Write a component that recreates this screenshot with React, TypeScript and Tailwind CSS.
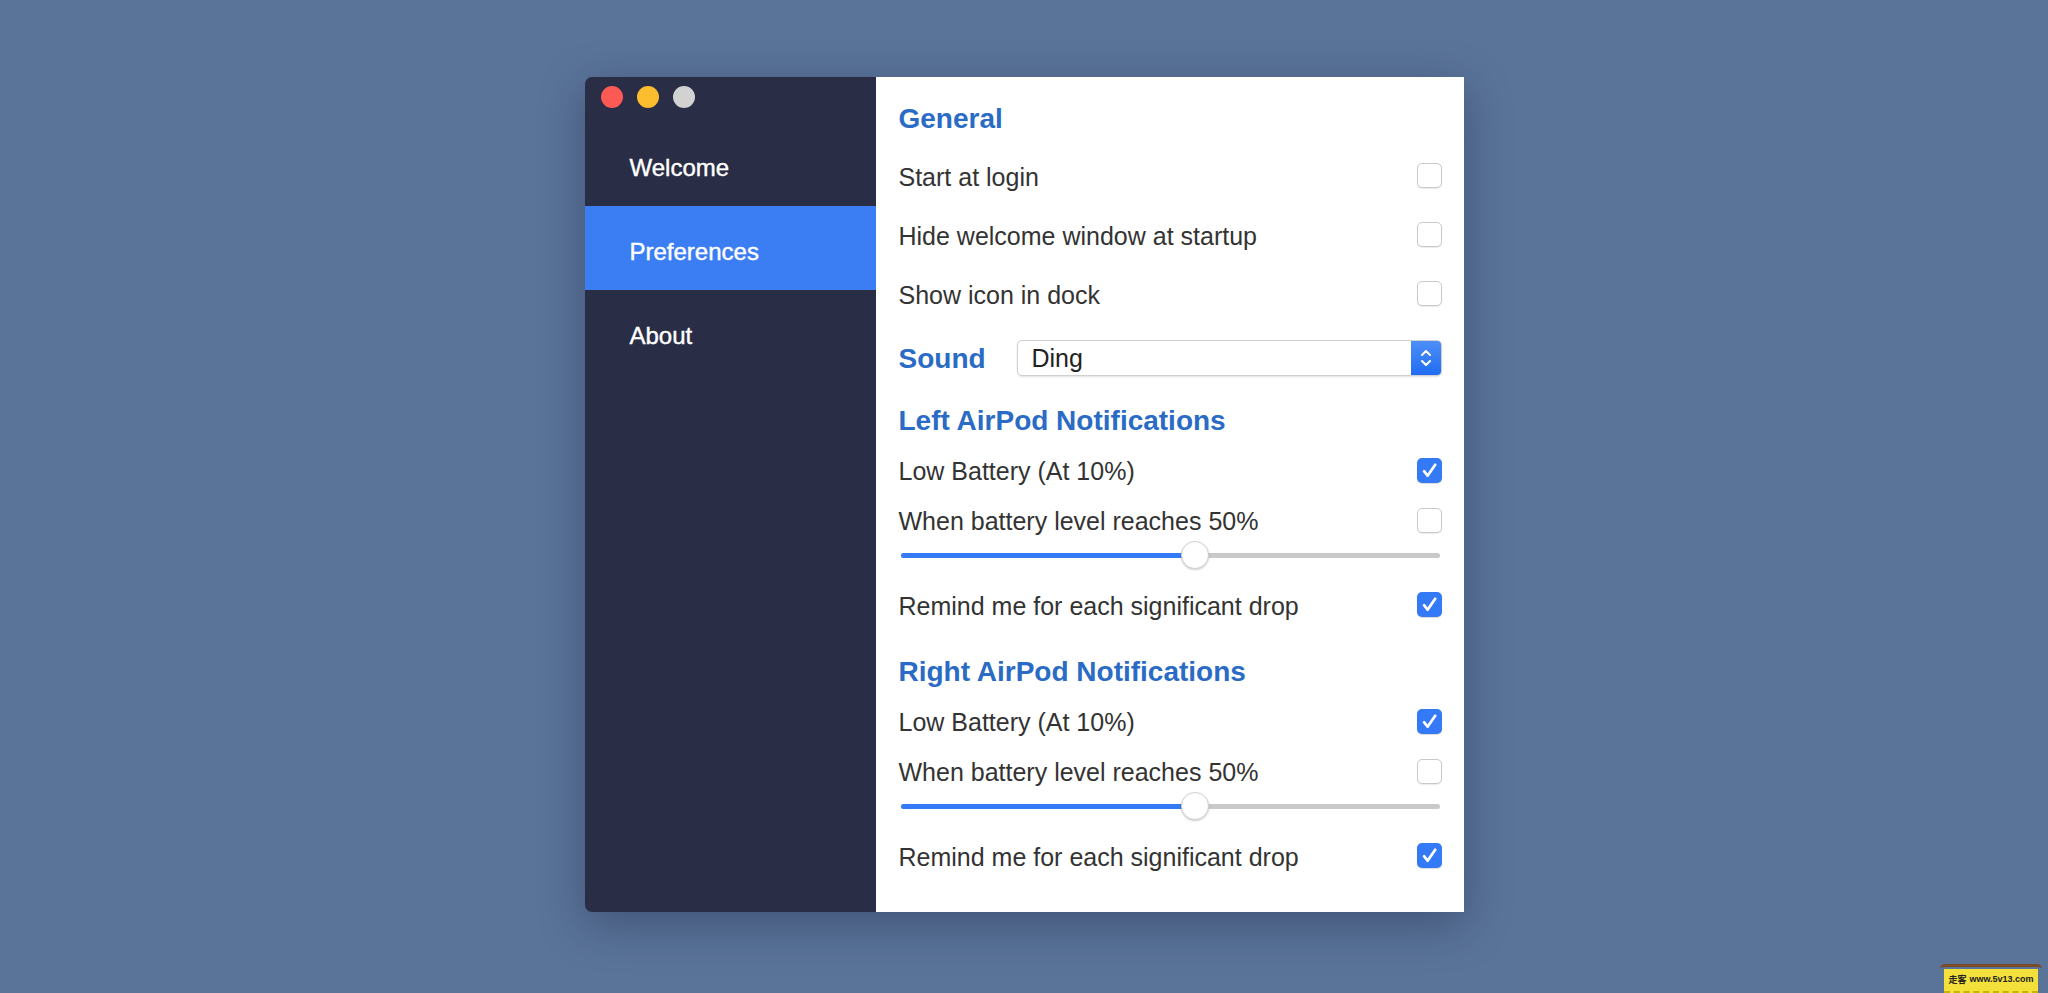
import React from 'react';

const font = { fontFamily: '"Liberation Sans", Arial, sans-serif' };

const Checkbox: React.FC<{ checked?: boolean }> = ({ checked }) =>
  checked ? (
    <span className="flex h-[25px] w-[25px] items-center justify-center rounded-[5px] bg-[#3479f6] shadow-[0_1px_1px_rgba(0,0,0,0.15)]">
      <svg width="19" height="19" viewBox="0 0 16 16" fill="none">
        <path d="M3.4 8.6 L6.4 12.4 L12.8 3.2" stroke="white" strokeWidth="2.3" strokeLinecap="round" strokeLinejoin="round" />
      </svg>
    </span>
  ) : (
    <span className="block h-[25px] w-[25px] rounded-[5px] border border-[#c9c9c9] bg-white shadow-[0_1px_1px_rgba(0,0,0,0.08)]" />
  );

const Row: React.FC<{ label: string; checked?: boolean; h: string }> = ({ label, checked, h }) => (
  <div className={`flex items-center justify-between ${h}`}>
    <span className="pt-[4px] text-[25px] text-[#333333]">{label}</span>
    <Checkbox checked={checked} />
  </div>
);

const Slider: React.FC<{ value: number }> = ({ value }) => (
  <div className="relative flex h-[20px] items-center px-[2px]">
    <div className="relative h-[5px] w-full rounded-full bg-[#c9c9c9]">
      <div className="h-full rounded-full bg-[#3479f6]" style={{ width: `${value}%` }} />
      <span
        className="absolute top-1/2 h-[28px] w-[28px] -translate-x-1/2 -translate-y-1/2 rounded-full border border-[#d2d2d2] bg-white shadow-[0_1px_2px_rgba(0,0,0,0.2)]"
        style={{ left: `${value}%` }}
      />
    </div>
  </div>
);

const Heading: React.FC<{ children: React.ReactNode; className?: string }> = ({ children, className = '' }) => (
  <h2 className={`flex items-center pt-[2px] text-[28px] font-bold text-[#2a6bc6] ${className}`}>{children}</h2>
);

const NotificationBlock: React.FC<{ title: string; className?: string }> = ({ title, className = '' }) => (
  <div className={className}>
    <Heading className="h-[51px]">{title}</Heading>
    <Row label="Low Battery (At 10%)" checked h="h-[50px]" />
    <Row label="When battery level reaches 50%" h="h-[50px]" />
    <Slider value={54.7} />
    <div className="mt-[14px]">
      <Row label="Remind me for each significant drop" checked h="h-[51px]" />
    </div>
  </div>
);

const App: React.FC = () => {
  const nav = ['Welcome', 'Preferences', 'About'];

  return (
    <div className="relative h-[993px] w-full overflow-hidden bg-[#5a7399] pt-[77px]" style={font}>
      <div className="mx-auto flex h-[835px] w-[879px] overflow-hidden rounded-l-[7px] shadow-[0_12px_45px_rgba(20,30,60,0.35)]">
        {/* sidebar */}
        <aside className="w-[291px] shrink-0 bg-[#292d45]">
          <div className="flex gap-[14px] pl-[16px] pt-[9px]">
            <span className="h-[22px] w-[22px] rounded-full bg-[#fd5a55]" />
            <span className="h-[22px] w-[22px] rounded-full bg-[#fcbd2e]" />
            <span className="h-[22px] w-[22px] rounded-full bg-[#d2d2d2]" />
          </div>
          <nav className="mt-[14px]">
            {nav.map((item) => (
              <div
                key={item}
                className={`flex h-[84px] items-center pl-[45px] pt-[7px] text-[24px] text-white [-webkit-text-stroke:0.4px_white] ${
                  item === 'Preferences' ? 'bg-[#3b7ef3]' : ''
                }`}
              >
                {item}
              </div>
            ))}
          </nav>
        </aside>

        {/* content */}
        <main className="flex-1 bg-white pl-[23px] pr-[22px] pt-[21px]">
          <Heading className="h-[40px]">General</Heading>
          <div className="mt-[8px]">
            <Row label="Start at login" h="h-[59px]" />
            <Row label="Hide welcome window at startup" h="h-[59px]" />
            <Row label="Show icon in dock" h="h-[59px]" />
          </div>

          <div className="mt-[11px] flex h-[48px] items-center">
            <Heading className="w-[118px] shrink-0">Sound</Heading>
            <div className="flex h-[36px] flex-1 items-center overflow-hidden rounded-[5px] border border-[#d0d0d0] bg-white shadow-[0_1px_2px_rgba(0,0,0,0.12)]">
              <span className="flex-1 pl-[14px] pt-[2px] text-[25px] text-[#222222]">Ding</span>
              <span className="flex h-full w-[30px] items-center justify-center bg-gradient-to-b from-[#4d8ff8] to-[#1f6cf3]">
                <svg width="14" height="24" viewBox="0 0 14 24" fill="none">
                  <path d="M3 9 L7 5 L11 9" stroke="white" strokeWidth="2" strokeLinecap="round" strokeLinejoin="round" />
                  <path d="M3 15 L7 19 L11 15" stroke="white" strokeWidth="2" strokeLinecap="round" strokeLinejoin="round" />
                </svg>
              </span>
            </div>
          </div>

          <NotificationBlock title="Left AirPod Notifications" className="mt-[12px]" />
          <NotificationBlock title="Right AirPod Notifications" className="mt-[15px]" />
        </main>
      </div>

      {/* watermark badge */}
      <div className="absolute bottom-0 right-[10px] w-[94px]">
        <div className="mx-[-4px] h-[5px] rounded-t-full border-t-[3px] border-[#7a4a2a]" />
        <div className="flex h-[24px] items-center justify-center gap-[3px] border-b-2 border-dashed border-[#c9b400] bg-[#f4e03a] text-[9px] font-bold text-[#222]">
          <span style={{ fontFamily: '"Noto Sans CJK SC", sans-serif' }}>走客</span>
          <span>www.5v13.com</span>
        </div>
      </div>
    </div>
  );
};

export default App;
